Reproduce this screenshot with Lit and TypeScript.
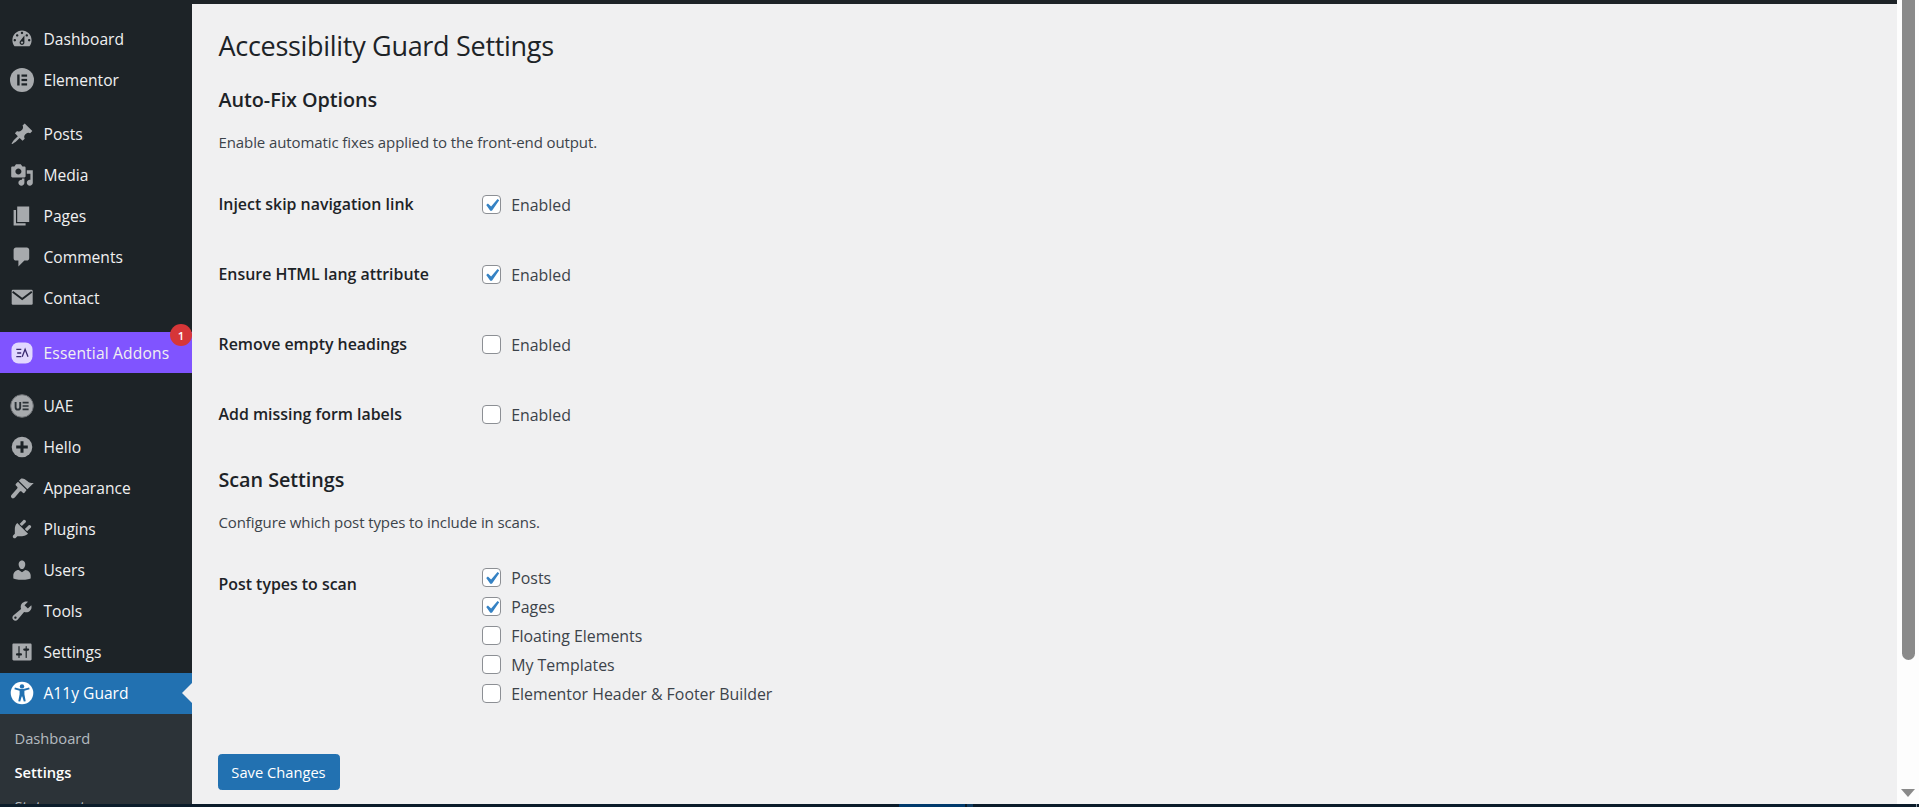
import { LitElement, html, css, svg } from 'lit';
import { customElement } from 'lit/decorators.js';

const ICONS: Record<string, string> = {
  dashboard: 'M3.76 16h12.48c1.1-1.37 1.76-3.11 1.76-5 0-4.42-3.58-8-8-8s-8 3.58-8 8c0 1.89.66 3.63 1.76 5zM10 4c.55 0 1 .45 1 1s-.45 1-1 1-1-.45-1-1 .45-1 1-1zM6 6c.55 0 1 .45 1 1s-.45 1-1 1-1-.45-1-1 .45-1 1-1zm8 0c.55 0 1 .45 1 1s-.45 1-1 1-1-.45-1-1 .45-1 1-1zm-5.37 5.55L12 7v6c0 1.1-.9 2-2 2s-2-.9-2-2c0-.57.24-1.08.63-1.45zM4 10c.55 0 1 .45 1 1s-.45 1-1 1-1-.45-1-1 .45-1 1-1zm12 0c.55 0 1 .45 1 1s-.45 1-1 1-1-.45-1-1 .45-1 1-1zm-5 3c0-.55-.45-1-1-1s-1 .45-1 1 .45 1 1 1 1-.45 1-1z',
  posts: 'M10.44 3.02l1.82-1.82 6.36 6.35-1.83 1.82c-1.05-.68-2.48-.57-3.41.36l-.75.75c-.92.93-1.04 2.35-.35 3.41l-1.83 1.82-2.41-2.41-2.8 2.79c-.42.42-3.38 2.71-3.8 2.29s1.86-3.39 2.28-3.81l2.79-2.79L4.1 9.36l1.83-1.82c1.05.69 2.48.57 3.4-.36l.75-.75c.93-.92 1.05-2.35.36-3.41z',
  media: 'M13 11V4c0-.55-.45-1-1-1h-1.67L9 1H5L3.67 3H2c-.55 0-1 .45-1 1v7c0 .55.45 1 1 1h10c.55 0 1-.45 1-1zM7 4.5c1.38 0 2.5 1.12 2.5 2.5S8.38 9.5 7 9.5 4.5 8.38 4.5 7 5.62 4.5 7 4.5zM14 6h5v10.5c0 1.38-1.12 2.5-2.5 2.5S14 17.88 14 16.5s1.12-2.5 2.5-2.5c.17 0 .34.02.5.05V9h-3V6zm-4 8.05V13h2v3.5c0 1.38-1.12 2.5-2.5 2.5S7 17.88 7 16.5 8.12 14 9.5 14c.17 0 .34.02.5.05z',
  pages: 'M6 15V2h10v13H6zm-1 1h8v2H3V5h2v11z',
  comments: 'M5 2h9c1.1 0 2 .9 2 2v7c0 1.1-.9 2-2 2h-2l-5 5v-5H5c-1.1 0-2-.9-2-2V4c0-1.1.9-2 2-2z',
  appearance: 'M14.48 11.06L7.41 3.99l1.5-1.5c.5-.56 2.3-.47 3.51.32 1.21.8 1.43 1.28 2.91 2.1 1.18.64 2.45 1.26 4.45.85z M13.77 11.77L6.7 4.7 4.93 6.47c-.39.39-.39 1.02 0 1.41l1.06 1.06c.39.39.39 1.03 0 1.42L1.4 15.6c-.8.8-.8 2 0 2.6.7.7 1.8.6 2.6-.2l4.2-5c.39-.39 1.03-.39 1.42 0l1.06 1.06c.39.39 1.02.39 1.41 0z',
  plugins: 'M13.11 4.36L9.87 7.6 8 5.73l3.24-3.24c.35-.34 1.05-.2 1.56.32.52.51.66 1.21.31 1.55zm-8 1.77l.91-1.12 9.01 9.01-1.19.84c-.71.71-2.63 1.16-3.82 1.16H6.14L4.9 17.26c-.59.59-1.54.59-2.12 0-.59-.58-.59-1.53 0-2.12l1.24-1.24v-3.88c0-1.13.4-3.19 1.09-3.89zm7.26 3.97l3.24-3.24c.34-.35 1.04-.21 1.55.31.52.51.66 1.21.31 1.55l-3.24 3.25z',
  users: 'M10 9.25c-2.27 0-2.73-3.44-2.73-3.44C7 4.02 7.82 2 9.97 2c2.16 0 2.98 2.02 2.71 3.81 0 0-.41 3.44-2.68 3.44zm0 2.57L12.72 10c2.39 0 4.52 2.33 4.52 4.53v2.49s-3.65 1.13-7.24 1.13c-3.65 0-7.24-1.13-7.24-1.13v-2.49c0-2.25 1.94-4.53 4.47-4.53z',
  tools: 'M16.68 9.77c-1.34 1.34-3.3 1.67-4.95.99l-5.41 6.52c-.99.99-2.59.99-3.58 0s-.99-2.59 0-3.57l6.52-5.42c-.68-1.65-.35-3.61.99-4.95 1.28-1.28 3.12-1.62 4.72-1.06l-2.89 2.89 2.82 2.82 2.86-2.87c.53 1.58.18 3.39-1.08 4.65zM3.81 16.21c.4.39 1.04.39 1.43 0 .4-.4.4-1.04 0-1.43-.39-.4-1.03-.4-1.43 0-.39.39-.39 1.03 0 1.43z',
  settings: 'M18 16V4c0-.55-.45-1-1-1H3c-.55 0-1 .45-1 1v12c0 .55.45 1 1 1h14c.55 0 1-.45 1-1zM8 11h1c.55 0 1 .45 1 1s-.45 1-1 1H8v1.5c0 .28-.22.5-.5.5s-.5-.22-.5-.5V13H6c-.55 0-1-.45-1-1s.45-1 1-1h1V5.5c0-.28.22-.5.5-.5s.5.22.5.5V11zm5-2h-1c-.55 0-1-.45-1-1s.45-1 1-1h1V5.5c0-.28.22-.5.5-.5s.5.22.5.5V7h1c.55 0 1 .45 1 1s-.45 1-1 1h-1v5.5c0 .28-.22.5-.5.5s-.5-.22-.5-.5V9z',
};

// logos that are not plain dashicons, drawn on a 24 box
const LOGOS: Record<string, unknown> = {
  elementor: svg`<circle cx="12" cy="12" r="12" fill="#a7aaad"/>
    <g fill="#1d2327"><rect x="7.2" y="6.5" width="2.4" height="11"/><rect x="11.5" y="6.5" width="5.6" height="2.2"/><rect x="11.5" y="10.9" width="5.6" height="2.2"/><rect x="11.5" y="15.3" width="5.6" height="2.2"/></g>`,
  uae: svg`<circle cx="12" cy="12" r="11.3" fill="#a7aaad" stroke="#6f7276" stroke-width="1"/>
    <path d="M5.6 8v5.2c0 3.2 4.6 3.2 4.6 0V8" fill="none" stroke="#2c3338" stroke-width="1.9"/>
    <path d="M12.6 8.7h6M12.6 12h6M12.6 15.3h6" fill="none" stroke="#2c3338" stroke-width="1.7"/>`,
  hello: svg`<circle cx="12" cy="12" r="10.3" fill="#a7aaad"/>
    <path d="M12 6.2v11.6M6.2 12h11.6" stroke="#1d2327" stroke-width="3"/>`,
  ea: svg`<rect x="1.5" y="1.5" width="21" height="21" rx="7" fill="#e2d8ff"/>
    <path d="M6.3 8.4h5M7.2 12h4M6.3 15.6h5" stroke="#3a2a70" stroke-width="1.3" fill="none"/>
    <path d="M12.2 15.8l2.9-7.6 2.9 7.6" stroke="#3a2a70" stroke-width="1.3" fill="none"/>`,
  a11y: svg`<circle cx="12" cy="12" r="11.3" fill="#fff"/>
    <circle cx="12" cy="5.4" r="2.2" fill="#2271b1"/>
    <path d="M4.4 8.3l5.2 1.5v3.4L8.3 20.2l1.9.4 1.5-5.2h.6l1.5 5.2 1.9-.4-1.3-7V9.8l5.2-1.5-.5-1.7-5.6 1.3h-3l-5.6-1.3z" fill="#2271b1"/>`,
  contact: svg`<rect x="1.7" y="3.7" width="21" height="15" rx="1.2" fill="#a7aaad"/>
    <path d="M2.6 5.8L12.2 13l9.6-7.2" fill="none" stroke="#1d2327" stroke-width="1.9"/>`,
};

type MenuItem = { label: string; icon: string; kind?: string; badge?: string };

const MENU_TOP: MenuItem[] = [
  { label: 'Dashboard', icon: 'dashboard' },
  { label: 'Elementor', icon: 'elementor' },
];
const MENU_CONTENT: MenuItem[] = [
  { label: 'Posts', icon: 'posts' },
  { label: 'Media', icon: 'media' },
  { label: 'Pages', icon: 'pages' },
  { label: 'Comments', icon: 'comments' },
  { label: 'Contact', icon: 'contact' },
];
const MENU_EA: MenuItem[] = [
  { label: 'Essential Addons', icon: 'ea', kind: 'ea', badge: '1' },
];
const MENU_REST: MenuItem[] = [
  { label: 'UAE', icon: 'uae' },
  { label: 'Hello', icon: 'hello' },
  { label: 'Appearance', icon: 'appearance' },
  { label: 'Plugins', icon: 'plugins' },
  { label: 'Users', icon: 'users' },
  { label: 'Tools', icon: 'tools' },
  { label: 'Settings', icon: 'settings' },
  { label: 'A11y Guard', icon: 'a11y', kind: 'current' },
];

const AUTO_FIX = [
  { label: 'Inject skip navigation link', on: true },
  { label: 'Ensure HTML lang attribute', on: true },
  { label: 'Remove empty headings', on: false },
  { label: 'Add missing form labels', on: false },
];
const POST_TYPES = [
  { label: 'Posts', on: true },
  { label: 'Pages', on: true },
  { label: 'Floating Elements', on: false },
  { label: 'My Templates', on: false },
  { label: 'Elementor Header & Footer Builder', on: false },
];

@customElement('app-root')
export class AppRoot extends LitElement {
  static styles = css`
    :host {
      display: block;
      font-family: "Open Sans", "Noto Sans", sans-serif;
      font-size: 15.6px;
      color: #3c434a;
    }
    .page {
      display: grid;
      grid-template-columns: 192px 1fr 22px;
      grid-template-rows: 804px 3px;
      height: 807px;
      overflow: hidden;
    }

    /* admin menu */
    .sidebar {
      background: #1d2327;
      padding-top: 18px;
      overflow: hidden;
    }
    .item {
      display: flex;
      align-items: center;
      height: 41px;
      color: #f0f0f1;
      position: relative;
    }
    .item .ico {
      width: 24px;
      height: 24px;
      margin-left: 10px;
      margin-right: 9.5px;
      flex: none;
      fill: #a7aaad;
    }
    .sep { height: 13.6px; }
    .sep.tight { height: 12.6px; }
    .item.ea { background: #8054ff; letter-spacing: 0.15px; }
    .item.current { background: #2271b1; color: #fff; }
    .item.current::after {
      content: '';
      position: absolute;
      right: 0;
      top: 50%;
      margin-top: -10px;
      border: 10px solid transparent;
      border-right-color: #f0f0f1;
      border-left-width: 0;
    }
    .badge {
      position: absolute;
      right: 0;
      top: -8px;
      width: 22px;
      height: 22px;
      border-radius: 50%;
      background: #d63638;
      color: #fff;
      font-size: 11.5px;
      font-weight: 600;
      display: flex;
      align-items: center;
      justify-content: center;
    }
    .submenu {
      background: #2c3338;
      padding-top: 7px;
      color: rgba(240, 246, 252, 0.7);
      font-size: 14.7px;
      height: 120px;
    }
    .submenu div {
      height: 34px;
      line-height: 34px;
      padding-left: 14.5px;
    }
    .submenu .on { color: #fff; font-weight: 600; }

    /* settings form */
    .content {
      background: #f0f0f1;
      padding: 4px 0 0 26.5px;
      position: relative;
      overflow: hidden;
    }
    .topline {
      position: absolute;
      left: 0;
      right: 0;
      top: 0;
      height: 4px;
      background: #1d2327;
    }
    h1 {
      margin: 0;
      padding-top: 24px;
      font-size: 27px;
      letter-spacing: -0.3px;
      line-height: 36px;
      font-weight: 400;
      color: #1d2327;
    }
    h2 {
      margin: 0;
      font-size: 19.8px;
      letter-spacing: -0.05px;
      line-height: 26px;
      font-weight: 600;
      color: #1d2327;
    }
    .h2a { margin-top: 22.5px; }
    .h2b { margin-top: 17.3px; }
    p {
      margin: 17px 0 0;
      font-size: 15px;
      letter-spacing: -0.1px;
      line-height: 24px;
    }
    .row {
      display: flex;
      height: 70px;
      align-items: center;
    }
    .rows { margin-top: 16.3px; }
    .row-label, .scan-label {
      width: 263px;
      flex: none;
      font-size: 15.9px;
      font-weight: 600;
      color: #1d2327;
    }
    .row-label { padding-bottom: 2px; }
    .check {
      display: flex;
      align-items: center;
      gap: 10.5px;
      font-size: 15.9px;
    }
    .box {
      width: 19.2px;
      height: 19.2px;
      box-sizing: border-box;
      border: 1px solid #8c8f94;
      border-radius: 4px;
      background: #fff;
      flex: none;
    }
    .box svg { display: block; margin: -2.9px 0 0 -4px; width: 25px; height: 25px; fill: #3582c4; }
    .scan { display: flex; margin-top: 29.3px; }
    .scan-label { padding-top: 2.7px; line-height: 36px; }
    .scan-list { display: flex; flex-direction: column; }
    .scan-list .check { height: 29px; }
    button {
      display: block;
      margin: 46px 0 0 -1px;
      width: 122px;
      height: 36px;
      border: 1px solid #2271b1;
      border-radius: 3.6px;
      background: #2271b1;
      color: #fff;
      font: inherit;
      font-size: 14.7px;
      padding: 0;
    }

    /* browser chrome */
    .scrollbar {
      background: #fdfdfd;
      position: relative;
    }
    .thumb {
      position: absolute;
      left: 5px;
      top: 0;
      width: 13px;
      height: 660px;
      background: #8a8a8a;
      border-radius: 0 0 7px 7px;
    }
    .arrow {
      position: absolute;
      left: 4px;
      top: 789px;
      border: 7.5px solid transparent;
      border-top: 8px solid #8a8a8a;
      border-bottom: 0;
    }
    .taskbar {
      grid-column: 1 / -1;
      background: #0b1c2a;
      display: flex;
    }
    .gap-left { width: 899px; }
    .task { width: 66px; background: #003a6c; }
    .task-small { width: 6px; margin-left: 2px; background: #0e3a5f; }
    .tick { width: 1px; margin-left: auto; margin-right: 2px; background: #8a97a3; }
  `;

  private renderIcon(name: string) {
    if (LOGOS[name]) return html`<svg class="ico" viewBox="0 0 24 24">${LOGOS[name]}</svg>`;
    return html`<svg class="ico" viewBox="0 0 20 20"><path fill-rule="evenodd" d=${ICONS[name]}></path></svg>`;
  }

  private renderItem(item: MenuItem) {
    return html`<div class="item ${item.kind ?? ''}">
      ${this.renderIcon(item.icon)}<span>${item.label}</span>
      ${item.badge ? html`<span class="badge">${item.badge}</span>` : ''}
    </div>`;
  }

  private renderCheck(label: string, on: boolean) {
    return html`<label class="check">
      <span class="box">
        ${on
          ? html`<svg viewBox="0 0 20 20"><path d="M14.83 4.89l1.34.94-5.81 8.38H9.02L5.78 9.67l1.34-1.25 2.57 2.4z"></path></svg>`
          : ''}
      </span>
      <span>${label}</span>
    </label>`;
  }

  render() {
    return html`<div class="page">
      <nav class="sidebar">
        ${MENU_TOP.map((i) => this.renderItem(i))}
        <div class="sep"></div>
        ${MENU_CONTENT.map((i) => this.renderItem(i))}
        <div class="sep"></div>
        ${MENU_EA.map((i) => this.renderItem(i))}
        <div class="sep tight"></div>
        ${MENU_REST.map((i) => this.renderItem(i))}
        <div class="submenu">
          <div>Dashboard</div>
          <div class="on">Settings</div>
          <div>Statements</div>
        </div>
      </nav>
      <main class="content">
        <div class="topline"></div>
        <h1>Accessibility Guard Settings</h1>
        <h2 class="h2a">Auto-Fix Options</h2>
        <p>Enable automatic fixes applied to the front-end output.</p>
        <div class="rows">
          ${AUTO_FIX.map(
            (r) => html`<div class="row">
              <div class="row-label">${r.label}</div>
              ${this.renderCheck('Enabled', r.on)}
            </div>`
          )}
        </div>
        <h2 class="h2b">Scan Settings</h2>
        <p>Configure which post types to include in scans.</p>
        <div class="scan">
          <div class="scan-label">Post types to scan</div>
          <div class="scan-list">${POST_TYPES.map((r) => this.renderCheck(r.label, r.on))}</div>
        </div>
        <button>Save Changes</button>
      </main>
      <div class="scrollbar"><div class="thumb"></div><div class="arrow"></div></div>
      <div class="taskbar">
        <div class="gap-left"></div><div class="task"></div><div class="task-small"></div><div class="tick"></div>
      </div>
    </div>`;
  }
}
